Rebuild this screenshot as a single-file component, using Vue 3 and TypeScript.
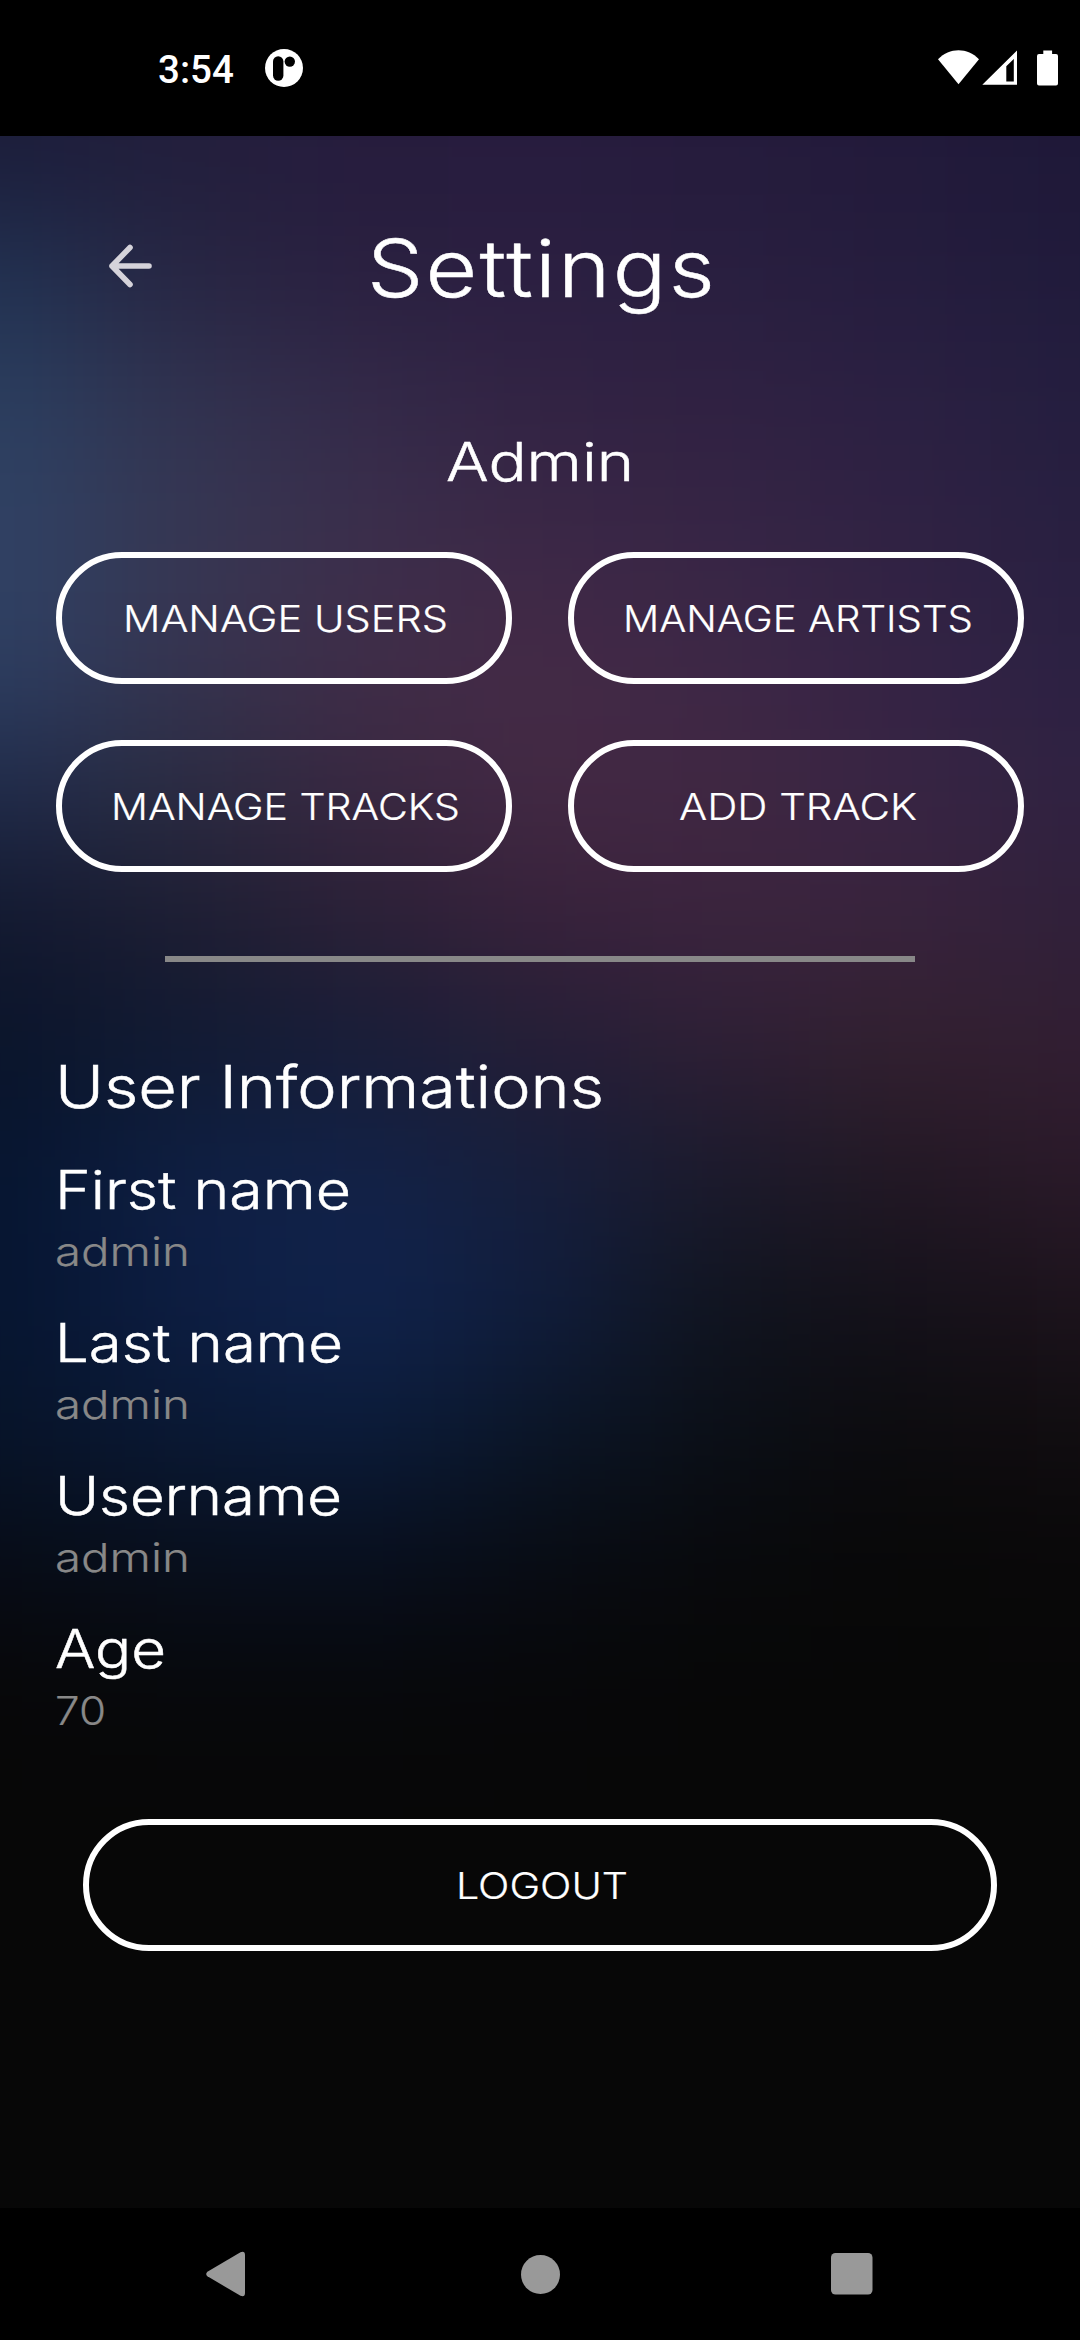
<script setup lang="ts">
import { h, type FunctionalComponent } from 'vue'

interface LabelProps {
  text: string
  size: number
  span: number
  height: number
  baseline: number
}

// One line of text, fitted to a fixed advance width.
const FitText: FunctionalComponent<LabelProps> = (p) =>
  h(
    'svg',
    { class: 'fit', width: p.span, height: p.height, viewBox: `0 0 ${p.span} ${p.height}` },
    [
      h(
        'text',
        {
          x: 0,
          y: p.baseline,
          'font-size': p.size,
          textLength: p.span,
          lengthAdjust: 'spacingAndGlyphs',
          fill: 'currentColor',
        },
        p.text,
      ),
    ],
  )
FitText.props = ['text', 'size', 'span', 'height', 'baseline']

const actions = [
  { text: 'MANAGE USERS', span: 325 },
  { text: 'MANAGE ARTISTS', span: 350 },
  { text: 'MANAGE TRACKS', span: 349 },
  { text: 'ADD TRACK', span: 238 },
]

const fields = [
  { label: 'First name', labelSpan: 296, value: 'admin', valueSpan: 135 },
  { label: 'Last name', labelSpan: 288, value: 'admin', valueSpan: 135 },
  { label: 'Username', labelSpan: 287, value: 'admin', valueSpan: 135 },
  { label: 'Age', labelSpan: 111, value: '70', valueSpan: 51 },
]

// Backdrop colours, one row per 128px, one column per 180px.
const rowStep = 128
const mesh: string[][] = [
  ['1b1d3a', '221e3c', '261c3d', '271c3e', '251b3c', '221a3a', '1e1838'],
  ['213252', '272643', '2a2040', '2b1f41', '291f40', '251d3e', '201b3b'],
  ['2b3f60', '313350', '342a49', '322343', '302142', '2b2042', '241e3f'],
  ['304265', '363753', '3b2f4c', '3b2746', '362545', '302243', '281f40'],
  ['2d3f62', '363450', '402d48', '442a46', '3d2746', '342345', '2b2142'],
  ['202b4a', '2a2c42', '382740', '432944', '402742', '382443', '302242'],
  ['12182f', '1d1d32', '2b2036', '37213a', '3b243e', '38233c', '30203a'],
  ['0a142a', '101a32', '171d38', '241e36', '2e1f35', '32202f', '321e32'],
  ['061530', '0e1f43', '122248', '161e3b', '1b1a2c', '221824', '2a1929'],
  ['061531', '0d1d42', '10234d', '101d3d', '10141f', '14111a', '1d131c'],
  ['07142a', '0a1935', '0b1c3b', '0b1628', '0b0f17', '0c0b0e', '110d10'],
  ['070c17', '080f1d', '080f1f', '080c14', '08090c', '080808', '090809'],
  ['070708', '07080b', '07080b', '070709', '070707', '070707', '070707'],
]
const meshCells = mesh.flatMap((row, r) =>
  row.map((c, i) => ({
    x: i === 0 ? -400 : i * 180 - 90,
    y: r === 0 ? -300 : r * rowStep - 50,
    w: i === 0 ? 490 : i === 6 ? 500 : 180,
    h: r === 0 ? 378 : rowStep,
    fill: '#' + c,
  })),
)
const meshEnd = mesh.length * rowStep - 50
</script>

<template>
  <div class="screen">
    <header class="status">
      <div class="status-left">
        <span class="time">3:54</span>
        <svg width="38" height="38" viewBox="0 0 38 38">
          <circle cx="19" cy="19" r="19" fill="#fff" />
          <rect x="8" y="7.3" width="10.4" height="24.5" rx="5.2" fill="#000" />
          <circle cx="24.8" cy="12.6" r="5.2" fill="#000" />
        </svg>
      </div>
      <svg class="status-icons" width="122" height="38" viewBox="0 0 122 38" fill="#fff">
        <path d="M0 10.3C11.500-1.800 29.500-1.800 41 10.300L20.500 35.300z" />
        <path fill-rule="evenodd" d="M79 1.500V35.700H44.300zM75.800 10L68.300 17.200V32.500H75.800z" />
        <path d="M105.300 1.500h8.800v3.500h3.900a2 2 0 0 1 2 2v27.500a2 2 0 0 1-2 2h-17a2 2 0 0 1-2-2V7a2 2 0 0 1 2-2h4.300z" />
      </svg>
    </header>

    <main class="app">
      <svg class="backdrop" width="1080" height="2072" viewBox="0 0 1080 2072">
        <defs>
          <filter id="soften" x="-400" y="-300" width="1900" height="2700" filterUnits="userSpaceOnUse" color-interpolation-filters="sRGB">
            <feGaussianBlur stdDeviation="72 60" />
          </filter>
        </defs>
        <rect width="1080" height="2072" fill="#070707" />
        <g filter="url(#soften)" shape-rendering="crispEdges">
          <rect v-for="(c, i) in meshCells" :key="i" :x="c.x" :y="c.y" :width="c.w" :height="c.h" :fill="c.fill" />
          <rect x="-400" :y="meshEnd" width="1900" height="900" fill="#070707" />
        </g>
      </svg>

      <div class="content">
        <div class="titlebar">
          <svg class="back" width="44" height="44" viewBox="0 0 44 44" fill="none" stroke="#d5d3da" stroke-width="5.600" stroke-linecap="round" stroke-linejoin="round">
            <path d="M41 22H4M22 3.500L4 22L22 40.500" />
          </svg>
          <FitText class="title" text="Settings" :size="79.5" :span="350" :height="100" :baseline="75" />
        </div>

        <FitText class="section" text="Admin" :size="53" :span="188" :height="70" :baseline="54" />

        <div class="actions">
          <button v-for="a in actions" :key="a.text" class="pill">
            <FitText :text="a.text" :size="37" :span="a.span" :height="40" :baseline="33.7" />
          </button>
        </div>

        <hr class="divider" />

        <section class="info">
          <FitText class="heading" text="User Informations" :size="58.3" :span="549" :height="80" :baseline="62" />
          <div v-for="f in fields" :key="f.label" class="field">
            <FitText :text="f.label" :size="53" :span="f.labelSpan" :height="67" :baseline="49" />
            <FitText class="value" :text="f.value" :size="40" :span="f.valueSpan" :height="50" :baseline="39" />
          </div>
        </section>

        <button class="pill logout">
          <FitText text="LOGOUT" :size="37" :span="172" :height="40" :baseline="34" />
        </button>
      </div>
    </main>

    <nav class="navbar">
      <svg width="40" height="46" viewBox="0 0 40 46" fill="#999">
        <path d="M1.400 20.700L34.500 1.200Q38.900-.5 39 4V42Q38.900 46.500 34.500 44.800L1.400 25.300Q-1 23 1.400 20.700z" />
      </svg>
      <svg width="39" height="39" viewBox="0 0 39 39" fill="#999"><circle cx="19.500" cy="19.500" r="19.500" /></svg>
      <svg width="42" height="42" viewBox="0 0 42 42" fill="#999"><rect width="41.500" height="41.500" rx="4.500" /></svg>
    </nav>
  </div>
</template>

<style>
body {
  background: #000;
}
</style>

<style scoped>
.screen {
  display: flex;
  flex-direction: column;
  width: 1080px;
  height: 2340px;
  overflow: hidden;
  background: #000;
  color: #fff;
  font-family: Inter, 'Liberation Sans', sans-serif;
  font-weight: 300;
}
svg {
  display: block;
  flex: none;
}
.fit {
  overflow: visible;
  stroke: currentColor;
  stroke-width: 0.5px;
}
.pill .fit,
.fit.value {
  stroke-width: 0.2px;
}
.status {
  box-sizing: border-box;
  display: flex;
  justify-content: space-between;
  height: 136px;
  padding: 49px 20px 0 158px;
}
.status-left {
  display: flex;
  gap: 30px;
}
.time {
  width: 77px;
  font: 500 38.5px/41px Roboto, sans-serif;
  white-space: nowrap;
}
.app {
  display: grid;
  height: 2072px;
  overflow: hidden;
}
.backdrop,
.content {
  grid-area: 1 / 1;
}
.content {
  display: flex;
  flex-direction: column;
  z-index: 1;
}
.titlebar {
  display: flex;
  margin: 86px 0 0 108px;
}
.back {
  margin-top: 22px;
}
.title {
  margin-left: 215px;
  letter-spacing: 2px;
}
.section {
  margin: 105px auto 0;
}
.actions {
  display: grid;
  grid-template-columns: 456px 456px;
  gap: 56px;
  margin: 55px 56px 0;
}
.pill {
  box-sizing: border-box;
  display: flex;
  justify-content: center;
  align-items: center;
  height: 132px;
  padding: 0 0 0 3px;
  border: 6px solid #fff;
  border-radius: 66px;
  background: transparent;
  color: inherit;
  font: inherit;
}
.divider {
  width: 750px;
  height: 6px;
  margin: 84px auto 0;
  border: 0;
  background: #888;
}
.info {
  margin: 84px 55px 0 54.5px;
}
.heading {
  margin-bottom: 34px;
}
.field {
  height: 153px;
}
.value {
  color: #888;
}
.logout {
  width: 914px;
  margin: 47px auto 0;
}
.navbar {
  display: flex;
  justify-content: space-between;
  align-items: center;
  height: 132px;
  padding: 0 207.500px 0 206px;
}
.navbar svg:nth-child(2) {
  margin-left: 4px;
}
</style>
